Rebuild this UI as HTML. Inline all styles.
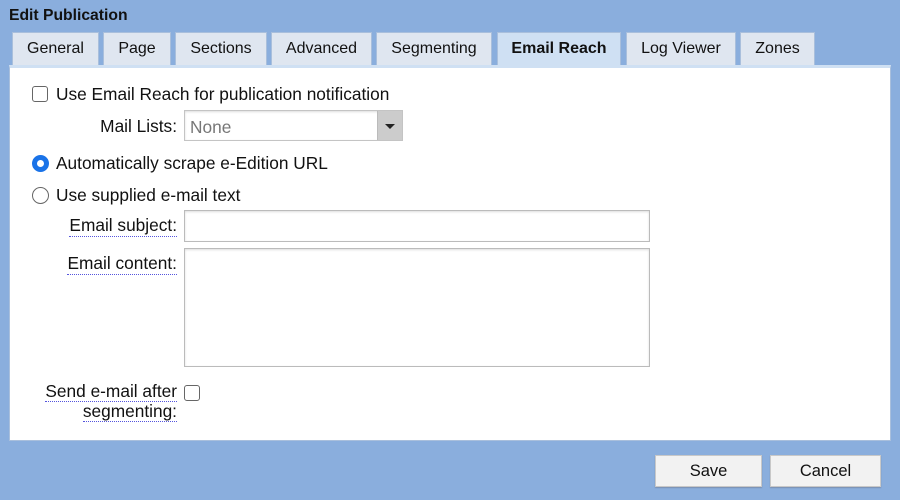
<!DOCTYPE html>
<html><head><style>
body{margin:0;width:900px;height:500px;background:#8aaedd;font-family:"Liberation Sans",Arial,sans-serif;position:relative;overflow:hidden;color:#111}
.a{position:absolute}
.title{left:9px;top:7px;font-weight:bold;font-size:15.7px}
.tab{position:absolute;top:32px;height:33px;background:#dfe6f0;border:1px solid #a9bfdc;border-bottom:none;box-sizing:border-box;font-size:16px;text-align:center;line-height:32px}
.tab.act{background:#cfe0f3;font-weight:bold;height:35px}
.panel{left:9px;top:65px;width:882px;height:376px;background:#fff;border:1px solid #a9bfdc;border-top:3px solid #cfe0f3;box-sizing:border-box}
.t{position:absolute;font-size:17.3px;white-space:nowrap}
.lbl{position:absolute;font-size:17.3px;text-align:right;white-space:nowrap}
.u{border-bottom:1px dotted #5555dd}
.cb{position:absolute;width:16px;height:16px;border:1.5px solid #666;border-radius:3px;box-sizing:border-box;background:#fff}
.rd{position:absolute;width:17px;height:17px;border:1.5px solid #666;border-radius:50%;box-sizing:border-box;background:#fff}
.inp{position:absolute;border:1px solid #bbb;box-shadow:inset 0 1px 2px #ddd;box-sizing:border-box;background:#fff}
.btn{position:absolute;top:455px;height:32px;background:#f2f2f2;border:1px solid #c8c8c8;box-sizing:border-box;font-size:16.5px;text-align:center;line-height:30px;box-shadow:0 1px 1px #7a8fb0}
</style></head><body>
<div class="a title">Edit Publication</div>
<div class="tab" style="left:12px;width:87px">General</div>
<div class="tab" style="left:103px;width:68px">Page</div>
<div class="tab" style="left:175px;width:92px">Sections</div>
<div class="tab" style="left:271px;width:101px">Advanced</div>
<div class="tab" style="left:376px;width:116px">Segmenting</div>
<div class="tab act" style="left:497px;width:124px">Email Reach</div>
<div class="tab" style="left:626px;width:110px">Log Viewer</div>
<div class="tab" style="left:740px;width:75px">Zones</div>
<div class="a panel"></div>

<div class="cb" style="left:32px;top:86px"></div>
<div class="t" style="left:56px;top:84px">Use Email Reach for publication notification</div>
<div class="lbl" style="right:723px;top:116px">Mail Lists:</div>
<div class="inp" style="left:184px;top:110px;width:219px;height:31px;border-color:#c4c4c4">
<span style="position:absolute;left:5px;top:6px;font-size:17.3px;color:#777">None</span>
<div style="position:absolute;right:0;top:0;width:24px;height:29px;background:#ccc;border-left:1px solid #bbb"></div>
<div style="position:absolute;right:7px;top:13px;width:0;height:0;border-left:5px solid transparent;border-right:5px solid transparent;border-top:5px solid #222"></div>
</div>

<div class="rd" style="left:32px;top:155px;border:5px solid #1a73e8"></div>
<div class="t" style="left:56px;top:153px">Automatically scrape e-Edition URL</div>
<div class="rd" style="left:32px;top:187px"></div>
<div class="t" style="left:56px;top:185px">Use supplied e-mail text</div>

<div class="lbl u" style="right:723px;top:215px">Email subject:</div>
<div class="inp" style="left:184px;top:210px;width:466px;height:32px"></div>
<div class="lbl u" style="right:723px;top:253px">Email content:</div>
<div class="inp" style="left:184px;top:248px;width:466px;height:119px"></div>

<div class="lbl" style="right:723px;top:381px;line-height:20px"><span class="u">Send e-mail after</span><br><span class="u">segmenting:</span></div>
<div class="cb" style="left:184px;top:385px"></div>

<div class="btn" style="left:655px;width:107px">Save</div>
<div class="btn" style="left:770px;width:111px">Cancel</div>
</body></html>
